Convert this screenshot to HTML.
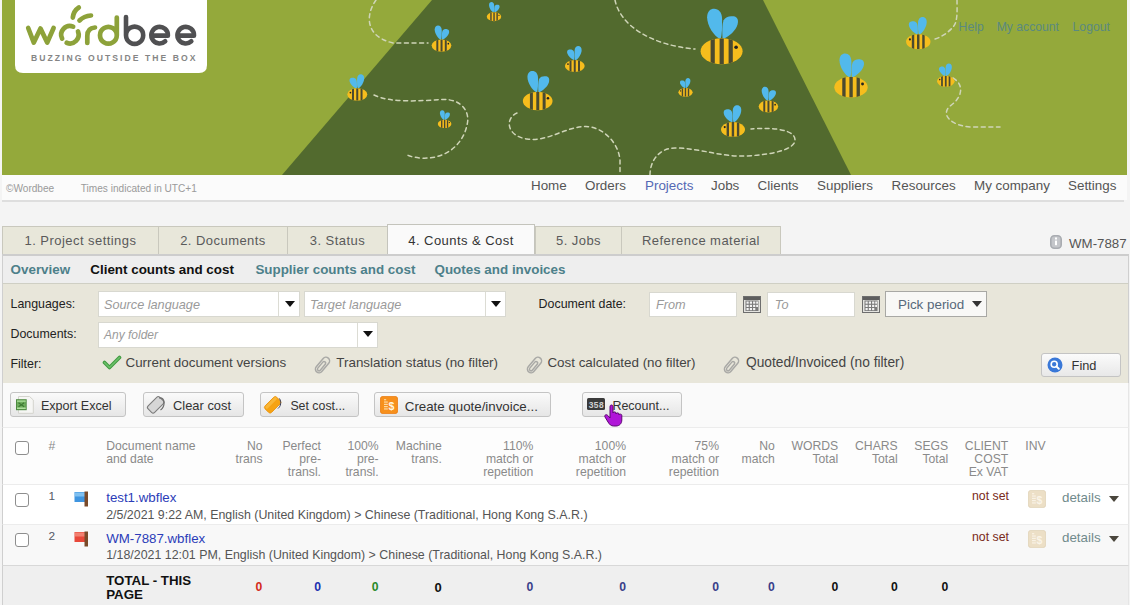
<!DOCTYPE html>
<html><head><meta charset="utf-8">
<style>
*{margin:0;padding:0;box-sizing:border-box}
html,body{width:1130px;height:605px;overflow:hidden;background:#f4f4f4;font-family:"Liberation Sans",sans-serif;color:#333}
.a{position:absolute;white-space:nowrap;line-height:1}
.caret{width:0;height:0;border-left:5px solid transparent;border-right:5px solid transparent;border-top:6px solid #111}
.cal{width:18px;height:17px;border:1px solid #8a8a8a;border-radius:2px;background:repeating-linear-gradient(90deg,#9a9a9a 0 1px,#e4e4e4 1px 4px),#ddd;box-shadow:inset 0 3px 0 #777}
.bt{top:400px;color:#333}
.nset{font-size:12.3px;color:#7a2a20}
.det{font-size:13.35px;color:#708a8c}

#banner{position:absolute;left:2px;top:0;width:1125px;height:175px}
#strip{position:absolute;left:2px;top:175px;width:1125px;height:25px;background:#fbfbfb}
#stripline{position:absolute;left:2px;top:200px;width:1122px;height:2px;background:#dedede}
.nav{font-size:13.4px;color:#555;top:179px}
.tab{position:absolute;top:226px;height:29px;background:#e8e7da;border:1px solid #c9c8bd;border-bottom:none;font-size:13px;letter-spacing:0.45px;color:#5a5a5a;text-align:center;line-height:28.5px}
#subnav{position:absolute;left:2px;top:254px;width:1127px;height:30px;background:#eeeeee;border:1px solid #cfcfcf;border-top:2px solid #cdcdcd;border-bottom:1px solid #cfcfc4}
.sn{font-size:13.4px;font-weight:bold;color:#4d808a;top:263px}
#filter{position:absolute;left:2px;top:284px;width:1127px;height:99px;background:#e8e6da;border-left:1px solid #cfcfcf;border-right:1px solid #cfcfcf}
.lbl{font-size:12.4px;color:#222}
.inp{position:absolute;background:#fff;border:1px solid #d8d8d0;height:26px}
.ph{font-style:italic;color:#9a9a9a;font-size:12.7px}
.ft{font-size:13.4px;color:#444}
#toolbar{position:absolute;left:2px;top:383px;width:1127px;height:44px;background:#fafafa;border-left:1px solid #cfcfcf;border-right:1px solid #e6e6e6}
.btn{position:absolute;top:392px;height:25px;border:1px solid #c4c4c4;border-radius:3px;background:linear-gradient(#fafafa,#e6e6e6);font-size:13px;color:#333;line-height:23px}
#thead{position:absolute;left:2px;top:427px;width:1127px;height:58px;background:#fdfdfd;border-top:1px solid #ececec;border-left:1px solid #cfcfcf;border-right:1px solid #e6e6e6}
.th{font-size:12.2px;color:#8a8a8a;line-height:13px;top:439.6px;text-align:right}
.row{position:absolute;left:2px;width:1127px;border-top:1px solid #ececec;border-left:1px solid #cfcfcf;border-right:1px solid #e6e6e6}
.cb{position:absolute;width:14.5px;height:14.5px;border:1px solid #8e8e8e;border-radius:3px;background:#fff}
.doc{font-size:13.3px;color:#2b3cb8}
.sub{font-size:12.4px;color:#555}
.tot{font-size:12.2px;font-weight:bold;top:581px;text-align:right}
</style></head><body>

<svg id="banner" width="1125" height="175" viewBox="2 0 1125 175">
<defs>
<g id="bee">
 <clipPath id="bodyclip"><ellipse cx="0" cy="0" rx="21" ry="13"/></clipPath>
 <path d="M-1,-12 C-8,-15 -14.5,-26 -14.5,-34 C-14.5,-40 -11,-42.5 -7.5,-42.5 C-3,-42.5 0.5,-39 0.5,-32 C0.5,-24 0.5,-17 -1,-12 Z" fill="#52b9ec"/>
 <path d="M1,-12 C0.5,-20 0.5,-27 2,-31 C4,-35 8,-35.5 12,-35 C16,-34.5 17,-31 16,-27 C14.5,-21 8,-15 1,-12 Z" fill="#52b9ec"/>
 <ellipse cx="0" cy="0" rx="21" ry="13" fill="#f6bd1d"/>
 <g clip-path="url(#bodyclip)" fill="#4a4a30">
 <rect x="-11" y="-13" width="4.2" height="26"/>
 <rect x="-2" y="-13" width="4.2" height="26"/>
 <rect x="7" y="-13" width="4.2" height="26"/>
 </g>
 <circle cx="14.5" cy="-4" r="1.8" fill="#222"/>
</g>
</defs>
<rect x="0" y="0" width="1130" height="175" fill="#94a93b"/>
<polygon points="432,0 763,0 851,175 282,175" fill="#526a2e"/>
<g fill="none" stroke="#cfd5b8" stroke-width="1.5" stroke-dasharray="4 3.6" stroke-linecap="round">
 <path d="M376,0 C366,14 364,36 393,43 L428,43"/>
 <path d="M374,95 C390,103 420,101 440,99.5 C465,98 470,115 467,125 C463,145 445,160 420,158 C412,157 408,156 406,154"/>
 <path d="M517,113 C505,118 506,136 527,139 C548,142 565,127 585,126.5 C600,126 618,140 620,160 L620,175"/>
 <path d="M650,175 C650,160 660,148 675,148 C700,148 720,157 745,156 C770,155 795,150 795,140 C795,130 775,127 751,129"/>
 <path d="M615,0 C620,25 650,45 695,49"/>
 <path d="M957,0 C957,10 958,22 953,27 C948,33 940,38 932,40"/>
 <path d="M953,78 C965,85 962,98 950,106 C940,115 952,126 971,127 L1000,127"/>
</g>
<use href="#bee" transform="translate(494,16.7) scale(0.343)"/>
<use href="#bee" transform="translate(441.5,45.6) scale(0.47)"/>
<use href="#bee" transform="translate(357.3,94.5) scale(-0.476,0.476)"/>
<use href="#bee" transform="translate(444.6,123.9) scale(0.324)"/>
<use href="#bee" transform="translate(574.8,66) scale(-0.471,0.471)"/>
<use href="#bee" transform="translate(537.7,101) scale(0.707)"/>
<use href="#bee" transform="translate(721.6,51.3) scale(1)"/>
<use href="#bee" transform="translate(685.5,92.3) scale(-0.338,0.338)"/>
<use href="#bee" transform="translate(768.4,106.5) scale(0.464)"/>
<use href="#bee" transform="translate(733,129.4) scale(-0.571,0.571)"/>
<use href="#bee" transform="translate(851,87.2) scale(0.795)"/>
<use href="#bee" transform="translate(945.8,81.3) scale(-0.419,0.419)"/>
<use href="#bee" transform="translate(918.3,41.7) scale(-0.58,0.58)"/>
<!-- logo -->
<path d="M15,0 H207 V65 Q207,73 199,73 H23 Q15,73 15,65 Z" fill="#fff"/>
<g fill="none" stroke="#8da23a" stroke-width="4.7" stroke-linecap="round" stroke-linejoin="round">
 <path d="M28.2,28 L33.8,42.6 L40.5,28.5 L47.2,42.6 L53.6,28"/>
 <path d="M73.16,26.63 A8.7,8.7 0 0 0 62.15,38.65"/>
 <path d="M66.64,42.77 A8.7,8.7 0 0 0 77.97,31.44"/>
 <path d="M72.8,17.6 Q73.5,11 78.8,7.5"/>
 <path d="M79.5,20.5 Q84,16 91,15.5"/>
 <path d="M87.3,43 V36 C87.3,30.5 90.5,27.8 95,27.5"/>
 <path d="M116.8,17.5 V35.3 A8.4,8.4 0 1 1 116.8,35.2"/>
</g>
<g fill="none" stroke="#505052" stroke-width="4.6" stroke-linecap="round" stroke-linejoin="round">
 <path d="M126,17 V35.3 A8.6,8.6 0 1 0 126,35.2"/>
 <path d="M151.3,35.6 H167.9 A8.3,8.3 0 1 0 165.2,41.3"/>
 <path d="M177.4,35.6 H194 A8.3,8.3 0 1 0 191.3,41.3"/>
</g>
<text x="31" y="60.7" font-family="Liberation Sans" font-weight="bold" font-size="8.6" letter-spacing="2.05" fill="#858585">BUZZING OUTSIDE THE BOX</text>
<text x="958.6" y="31" font-family="Liberation Sans" font-size="12.2" fill="#5a8a80">Help</text>
<text x="996.7" y="31" font-family="Liberation Sans" font-size="12.2" fill="#5a8a80">My account</text>
<text x="1072.6" y="31" font-family="Liberation Sans" font-size="12.2" fill="#5a8a80">Logout</text>
</svg>

<div id="strip"></div>
<div id="stripline"></div>
<div class="a" style="left:6px;top:184px;font-size:10.1px;color:#9a9a9a">©Wordbee</div>
<div class="a" style="left:80.8px;top:184px;font-size:10.1px;color:#9a9a9a">Times indicated in UTC+1</div>
<div class="a nav" style="left:531px">Home</div>
<div class="a nav" style="left:585px">Orders</div>
<div class="a nav" style="left:645px;color:#5468b4">Projects</div>
<div class="a nav" style="left:711px">Jobs</div>
<div class="a nav" style="left:757.6px">Clients</div>
<div class="a nav" style="left:817px">Suppliers</div>
<div class="a nav" style="left:891.6px">Resources</div>
<div class="a nav" style="left:974px">My company</div>
<div class="a nav" style="left:1068px">Settings</div>

<!-- tabs -->
<div class="tab" style="left:2px;width:157px">1. Project settings</div>
<div class="tab" style="left:158px;width:130px">2. Documents</div>
<div class="tab" style="left:287px;width:101px">3. Status</div>
<div class="tab" style="left:387px;width:148px;background:#fafafa;top:224px;height:30px;line-height:31px;color:#333;border-color:#c4c4bc">4. Counts &amp; Cost</div>
<div class="tab" style="left:535px;width:87px">5. Jobs</div>
<div class="tab" style="left:621px;width:160px">Reference material</div>
<svg class="a" style="left:1050px;top:235px" width="12" height="14" viewBox="0 0 12 14"><rect x="0.8" y="0.8" width="10.4" height="12.4" rx="3.5" fill="#c4c6ca" stroke="#a9acb1" stroke-width="1.6"/><rect x="5" y="2.5" width="2" height="2" fill="#fff"/><rect x="5" y="5.6" width="2" height="4.6" fill="#fff"/></svg>
<div class="a" style="left:1069px;top:236.5px;font-size:13.3px;color:#555">WM-7887</div>

<div id="subnav"></div>
<div class="a sn" style="left:10.6px">Overview</div>
<div class="a sn" style="left:90.3px;color:#111">Client counts and cost</div>
<div class="a sn" style="left:255.4px">Supplier counts and cost</div>
<div class="a sn" style="left:434.5px">Quotes and invoices</div>

<div id="filter"></div>
<div id="toolbar"></div>
<div id="thead"></div>
<div class="row" style="top:484px;height:41px;background:#fff"></div>
<div class="row" style="top:524px;height:42px;background:#f8f8f8"></div>
<div class="row" style="top:565px;height:40px;background:#efefef;border-top:1px solid #d8d8d8"></div>


<!-- filter content -->
<div class="a lbl" style="left:10.5px;top:298px">Languages:</div>
<div class="a lbl" style="left:10.5px;top:327.5px">Documents:</div>
<div class="a lbl" style="left:10.5px;top:357.8px">Filter:</div>
<div class="inp" style="left:98px;top:291px;width:202px"><div style="position:absolute;left:179px;top:0;width:1px;height:24px;background:#dcdcd4"></div></div>
<div class="a caret" style="left:284.5px;top:301px"></div>
<div class="a ph" style="left:104px;top:298.5px">Source language</div>
<div class="inp" style="left:304px;top:291px;width:202px"><div style="position:absolute;left:180px;top:0;width:1px;height:24px;background:#dcdcd4"></div></div>
<div class="a caret" style="left:491px;top:301px"></div>
<div class="a ph" style="left:310px;top:298.5px">Target language</div>
<div class="inp" style="left:98px;top:321.5px;width:280px"><div style="position:absolute;left:258px;top:0;width:1px;height:24px;background:#dcdcd4"></div></div>
<div class="a caret" style="left:362.5px;top:331px"></div>
<div class="a ph" style="left:104px;top:328.8px;font-size:12px">Any folder</div>
<div class="a lbl" style="left:538.6px;top:298.2px">Document date:</div>
<div class="inp" style="left:649px;top:291.5px;width:88px;height:25px"></div>
<div class="a ph" style="left:656px;top:298.5px">From</div>
<svg class="a" style="left:743px;top:296px" width="18" height="17" viewBox="0 0 18 17"><rect x="0.5" y="0.5" width="17" height="16" fill="#e4e4e0" stroke="#6e6e6e"/><rect x="1" y="1" width="16" height="3" fill="#5e5e5e"/><rect x="2.5" y="4.5" width="13" height="10.5" fill="#7a7a7a"/><g fill="#f4f4f4"><rect x="3.5" y="5.5" width="2.2" height="2.2"/><rect x="6.8" y="5.5" width="2.2" height="2.2"/><rect x="10.1" y="5.5" width="2.2" height="2.2"/><rect x="13.2" y="5.5" width="1.8" height="2.2"/><rect x="3.5" y="8.8" width="2.2" height="2.2"/><rect x="6.8" y="8.8" width="2.2" height="2.2"/><rect x="10.1" y="8.8" width="2.2" height="2.2"/><rect x="13.2" y="8.8" width="1.8" height="2.2"/><rect x="3.5" y="12" width="2.2" height="2.2"/><rect x="6.8" y="12" width="2.2" height="2.2"/><rect x="10.1" y="12" width="2.2" height="2.2"/></g></svg>
<div class="inp" style="left:767px;top:291.5px;width:88px;height:25px"></div>
<div class="a ph" style="left:774.8px;top:298.5px">To</div>
<svg class="a" style="left:862px;top:296px" width="18" height="17" viewBox="0 0 18 17"><rect x="0.5" y="0.5" width="17" height="16" fill="#e4e4e0" stroke="#6e6e6e"/><rect x="1" y="1" width="16" height="3" fill="#5e5e5e"/><rect x="2.5" y="4.5" width="13" height="10.5" fill="#7a7a7a"/><g fill="#f4f4f4"><rect x="3.5" y="5.5" width="2.2" height="2.2"/><rect x="6.8" y="5.5" width="2.2" height="2.2"/><rect x="10.1" y="5.5" width="2.2" height="2.2"/><rect x="13.2" y="5.5" width="1.8" height="2.2"/><rect x="3.5" y="8.8" width="2.2" height="2.2"/><rect x="6.8" y="8.8" width="2.2" height="2.2"/><rect x="10.1" y="8.8" width="2.2" height="2.2"/><rect x="13.2" y="8.8" width="1.8" height="2.2"/><rect x="3.5" y="12" width="2.2" height="2.2"/><rect x="6.8" y="12" width="2.2" height="2.2"/><rect x="10.1" y="12" width="2.2" height="2.2"/></g></svg>
<div class="a" style="left:885px;top:291px;width:102px;height:26px;border:1px solid #a8a8a4;background:#f8f8f6"></div>
<div class="a ft" style="left:898px;top:297.5px;color:#56687a">Pick period</div>
<div class="a caret" style="left:972px;top:301px;border-top-color:#333"></div>
<div class="a ft" style="left:125.5px;top:355.8px">Current document versions</div>
<svg class="a" style="left:102px;top:355px" width="20" height="16" viewBox="0 0 20 16"><path d="M2.5,7.5 L7.5,12.5 L17.5,2.5" fill="none" stroke="#3f9a3f" stroke-width="3.6" stroke-linecap="round" stroke-linejoin="round"/><path d="M2.5,7.5 L7.5,12.5 L17.5,2.5" fill="none" stroke="#6cc06a" stroke-width="1.6" stroke-linecap="round" stroke-linejoin="round"/></svg>
<div class="a ft" style="left:336.3px;top:355.8px">Translation status (no filter)</div>
<div class="a ft" style="left:547.4px;top:355.8px">Cost calculated (no filter)</div>
<div class="a ft" style="left:746px;top:355.8px;font-size:13.75px">Quoted/Invoiced (no filter)</div>
<svg class="a" style="left:313px;top:355px" width="19" height="19" viewBox="0 0 19 19"><g transform="translate(9.5,10) rotate(40)" fill="none" stroke="#a9a9a6" stroke-width="1.5"><rect x="-3.6" y="-9" width="7.2" height="18" rx="3.6"/><rect x="-1.6" y="-4" width="3.2" height="11" rx="1.6"/></g></svg>
<svg class="a" style="left:524.5px;top:355px" width="19" height="19" viewBox="0 0 19 19"><g transform="translate(9.5,10) rotate(40)" fill="none" stroke="#a9a9a6" stroke-width="1.5"><rect x="-3.6" y="-9" width="7.2" height="18" rx="3.6"/><rect x="-1.6" y="-4" width="3.2" height="11" rx="1.6"/></g></svg>
<svg class="a" style="left:722px;top:355px" width="19" height="19" viewBox="0 0 19 19"><g transform="translate(9.5,10) rotate(40)" fill="none" stroke="#a9a9a6" stroke-width="1.5"><rect x="-3.6" y="-9" width="7.2" height="18" rx="3.6"/><rect x="-1.6" y="-4" width="3.2" height="11" rx="1.6"/></g></svg>
<div class="a" style="left:1041px;top:352.5px;width:80px;height:24px;border:1px solid #c4c4c4;border-radius:3px;background:linear-gradient(#fbfbfb,#e8e8e8)"></div>
<svg class="a" style="left:1047px;top:357px" width="16" height="16" viewBox="0 0 16 16"><circle cx="8" cy="8" r="7.5" fill="#3a78d8"/><circle cx="7.2" cy="7.2" r="3" fill="none" stroke="#fff" stroke-width="1.6"/><path d="M9.4,9.4 L11.8,11.8" stroke="#fff" stroke-width="2" stroke-linecap="round"/></svg>
<div class="a" style="left:1071.6px;top:359.5px;font-size:12.8px;color:#333">Find</div>

<!-- toolbar -->
<div class="btn" style="left:10px;width:115.5px"></div>
<div class="btn" style="left:143px;width:101px"></div>
<div class="btn" style="left:260px;width:99px"></div>
<div class="btn" style="left:374.3px;width:176.5px"></div>
<div class="btn" style="left:582px;width:100px"></div>
<div class="a bt" style="left:40.9px;font-size:12.6px">Export Excel</div>
<div class="a bt" style="left:173px;font-size:12.9px">Clear cost</div>
<div class="a bt" style="left:290.4px;font-size:12.35px">Set cost...</div>
<div class="a bt" style="left:404.8px;font-size:13.3px">Create quote/invoice...</div>
<div class="a bt" style="left:612.4px;font-size:12.5px">Recount...</div>
<svg class="a" style="left:15px;top:396px" width="20" height="18" viewBox="0 0 20 18"><path d="M3.5,0.5 H14.5 L18.3,4 V17.3 H3.5 Z" fill="#f6f6f4" stroke="#d4d4ce"/><rect x="1" y="3.2" width="10.7" height="11" fill="#4e8a40"/><rect x="2" y="4.2" width="8.7" height="9" fill="#6fae5e"/><rect x="2" y="4.5" width="8.7" height="1.3" fill="#a8dc98"/><rect x="2" y="11.6" width="8.7" height="1.3" fill="#b8e6a8"/><path d="M3.5,6.8 L9.2,10.8 M9.2,6.8 L3.5,10.8" stroke="#3e7a32" stroke-width="1.3"/></svg>
<svg class="a" style="left:145px;top:394px" width="22" height="22" viewBox="0 0 22 22"><g transform="translate(10.5,11) rotate(45)"><rect x="-4.6" y="-8.5" width="9.2" height="16.5" rx="2.2" fill="#d6d6d6" stroke="#7c7c7c" stroke-width="1.1"/></g><path d="M14,4 C21,3 20,13 15.5,16" fill="none" stroke="#6c6c6c" stroke-width="1.2"/></svg>
<svg class="a" style="left:262px;top:394px" width="22" height="22" viewBox="0 0 22 22"><g transform="translate(10.5,11) rotate(45)"><rect x="-4.6" y="-8.5" width="9.2" height="16.5" rx="2.2" fill="#f6a313" stroke="#e9900a" stroke-width="0.8"/><rect x="-4" y="-8" width="3" height="15" rx="1.5" fill="#fbbf48" opacity="0.7"/></g><path d="M17.5,4.5 C19.5,8 19,12 16,14.5" fill="none" stroke="#3a3f5a" stroke-width="1"/></svg>
<svg class="a" style="left:380px;top:396px" width="18" height="18" viewBox="0 0 18 18"><rect x="0.4" y="0.4" width="17.2" height="17.2" rx="2.5" fill="#f7901c" stroke="#ea7a0c" stroke-width="0.8"/><g fill="#ffe0b0"><rect x="4" y="3.2" width="2.2" height="1.1"/><rect x="4" y="5.5" width="3.8" height="1.1"/><rect x="4" y="7.8" width="3.8" height="1.1"/><rect x="4" y="10.1" width="3.8" height="1.1"/><rect x="4" y="12.4" width="3.8" height="1.1"/></g><text x="8.6" y="13.8" font-family="Liberation Sans" font-weight="bold" font-size="10.5" fill="#fff5e0">$</text></svg>
<svg class="a" style="left:587px;top:398px" width="18" height="12" viewBox="0 0 18 12"><rect x="0" y="0" width="18" height="12" rx="1.5" fill="#3a3a3a"/><text x="1.5" y="9.5" font-family="Liberation Mono" font-weight="bold" font-size="8.5" fill="#d0d0d0">358</text></svg>
<svg class="a" style="left:603.5px;top:404px;z-index:5" width="19" height="23" viewBox="0 0 19 23"><path d="M6,2.5 C6,0.5 9,0.5 9,2.5 V9 C9,7.5 12,7.5 12,9 V10 C12,8.5 15,8.5 15,10 V11 C15,9.8 17.8,9.8 17.8,11.3 V16 C17.8,19.5 15.5,22 12,22 H9.5 C7,22 5.5,20.5 4,18 L1,13 C0,11 2.5,9.8 3.8,11.5 L6,14 Z" fill="#b016d8" stroke="#5a0870" stroke-width="1"/></svg>

<!-- table header -->
<div class="cb" style="left:14.6px;top:440.6px"></div>
<div class="a th" style="left:48.6px;text-align:left">#</div>
<div class="a th" style="left:106.2px;text-align:left">Document name<br>and date</div>
<div class="a th" style="right:867.4px">No<br>trans</div>
<div class="a th" style="right:809px">Perfect<br>pre-<br>transl.</div>
<div class="a th" style="right:751.4px">100%<br>pre-<br>transl.</div>
<div class="a th" style="right:688.2px">Machine<br>trans.</div>
<div class="a th" style="right:596.7px">110%<br>match or<br>repetition</div>
<div class="a th" style="right:504px">100%<br>match or<br>repetition</div>
<div class="a th" style="right:411px">75%<br>match or<br>repetition</div>
<div class="a th" style="right:355.2px">No<br>match</div>
<div class="a th" style="right:291.8px">WORDS<br>Total</div>
<div class="a th" style="right:232.3px">CHARS<br>Total</div>
<div class="a th" style="right:181.8px">SEGS<br>Total</div>
<div class="a th" style="right:121.8px">CLIENT<br>COST<br>Ex VAT</div>
<div class="a th" style="left:1025.3px;text-align:left">INV</div>

<!-- rows -->
<div class="cb" style="left:14.6px;top:492.8px"></div>
<div class="a sub" style="left:48.5px;top:491px;color:#555a66;font-size:11.8px">1</div>
<svg class="a" style="left:74px;top:491px" width="15" height="16" viewBox="0 0 15 16"><rect x="0.5" y="1" width="11" height="10" fill="#3f95e0"/><rect x="1" y="1.5" width="10" height="4" fill="#7fc0f0"/><rect x="10.5" y="0.5" width="3.5" height="15" fill="#7a4a2a"/></svg>
<div class="a doc" style="left:106.2px;top:491.4px">test1.wbflex</div>
<div class="a sub" style="left:106.2px;top:509.1px">2/5/2021 9:22 AM, English (United Kingdom) &gt; Chinese (Traditional, Hong Kong S.A.R.)</div>
<div class="a nset" style="left:972px;top:489.8px">not set</div>
<svg class="a" style="left:1028px;top:489.5px" width="18" height="18" viewBox="0 0 18 18"><rect x="0.4" y="0.4" width="17.2" height="17.2" rx="2.5" fill="#ecdfc6" stroke="#e0d2b6" stroke-width="0.8"/><g fill="#faf4e8"><rect x="4" y="3.2" width="2.2" height="1.1"/><rect x="4" y="5.5" width="3.8" height="1.1"/><rect x="4" y="7.8" width="3.8" height="1.1"/><rect x="4" y="10.1" width="3.8" height="1.1"/><rect x="4" y="12.4" width="3.8" height="1.1"/></g><text x="8.6" y="13.8" font-family="Liberation Sans" font-weight="bold" font-size="10.5" fill="#faf4e8">$</text></svg>
<div class="a det" style="left:1062px;top:490.9px">details</div>
<div class="a caret" style="left:1109px;top:495.8px;border-top-color:#4a463c"></div>

<div class="cb" style="left:14.6px;top:532.8px"></div>
<div class="a sub" style="left:48.5px;top:531.4px;color:#555a66;font-size:11.8px">2</div>
<svg class="a" style="left:74px;top:531px" width="15" height="16" viewBox="0 0 15 16"><rect x="0.5" y="1" width="11" height="10" fill="#e8483a"/><rect x="1" y="1.5" width="10" height="4" fill="#f28070"/><rect x="10.5" y="0.5" width="3.5" height="15" fill="#7a4a2a"/></svg>
<div class="a doc" style="left:106.2px;top:531.7px">WM-7887.wbflex</div>
<div class="a sub" style="left:106.2px;top:549.3px">1/18/2021 12:01 PM, English (United Kingdom) &gt; Chinese (Traditional, Hong Kong S.A.R.)</div>
<div class="a nset" style="left:972px;top:530.5px">not set</div>
<svg class="a" style="left:1028px;top:530px" width="18" height="18" viewBox="0 0 18 18"><rect x="0.4" y="0.4" width="17.2" height="17.2" rx="2.5" fill="#ecdfc6" stroke="#e0d2b6" stroke-width="0.8"/><g fill="#faf4e8"><rect x="4" y="3.2" width="2.2" height="1.1"/><rect x="4" y="5.5" width="3.8" height="1.1"/><rect x="4" y="7.8" width="3.8" height="1.1"/><rect x="4" y="10.1" width="3.8" height="1.1"/><rect x="4" y="12.4" width="3.8" height="1.1"/></g><text x="8.6" y="13.8" font-family="Liberation Sans" font-weight="bold" font-size="10.5" fill="#faf4e8">$</text></svg>
<div class="a det" style="left:1062px;top:531.2px">details</div>
<div class="a caret" style="left:1109px;top:536px;border-top-color:#4a463c"></div>

<!-- total -->
<div class="a" style="left:106.2px;top:573.7px;font-size:13.3px;font-weight:bold;color:#111;line-height:14.6px">TOTAL - THIS<br>PAGE</div>
<div class="a tot" style="right:867.7px;color:#d42a1a">0</div>
<div class="a tot" style="right:809px;color:#2030b0">0</div>
<div class="a tot" style="right:751.4px;color:#2a8a2a">0</div>
<div class="a tot" style="right:688.2px;color:#111;font-size:13px">0</div>
<div class="a tot" style="right:596.7px;color:#3a3f8a">0</div>
<div class="a tot" style="right:504px;color:#3a3f8a">0</div>
<div class="a tot" style="right:411px;color:#3a3f8a">0</div>
<div class="a tot" style="right:355.2px;color:#3a3f8a">0</div>
<div class="a tot" style="right:291.8px;color:#111">0</div>
<div class="a tot" style="right:232.3px;color:#111">0</div>
<div class="a tot" style="right:181.8px;color:#111">0</div>

</body></html>
